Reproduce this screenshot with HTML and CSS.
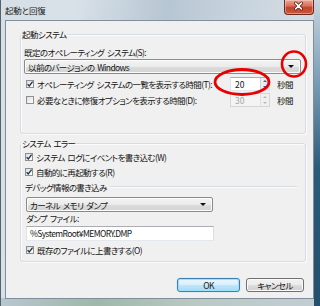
FILE: index.html
```html
<!DOCTYPE html>
<html lang="ja">
<head>
<meta charset="utf-8">
<title>起動と回復</title>
<link rel="stylesheet" href="styles.css">
</head>
<body>
<div class="win">
  <div class="titlebar">
    <span class="title">起動と回復</span>
    <div class="close">
      <svg width="30" height="15" viewBox="0 0 30 15">
        <path d="M12 4 L18 10 M18 4 L12 10" stroke="#5a1a10" stroke-width="3.2" stroke-linecap="round"/>
        <path d="M12 4 L18 10 M18 4 L12 10" stroke="#ffffff" stroke-width="1.6" stroke-linecap="round"/>
      </svg>
    </div>
  </div>
  <div class="client">
    <fieldset class="group g1">
      <legend>起動システム</legend>
      <div class="lbl l-os">既定のオペレーティング システム(S):</div>
      <div class="combo c-os"><span>以前のバージョンの Windows</span><i class="arrow"></i></div>
      <div class="trow r1">
        <div class="chk"><span class="box on"><svg width="8" height="8" viewBox="0 0 8 8"><path d="M1.6 4.2 L3.3 6 L6.6 1.6" fill="none" stroke="#22344c" stroke-width="1.3"/></svg></span><span>オペレーティング システムの一覧を表示する時間(T):</span></div>
        <div class="spin"><span class="val">20</span><span class="btns"><i class="up"></i><i class="dn"></i></span></div>
        <span class="unit">秒間</span>
      </div>
      <div class="trow r2">
        <div class="chk"><span class="box"></span><span>必要なときに修復オプションを表示する時間(D):</span></div>
        <div class="spin dis"><span class="val">30</span><span class="btns"><i class="up"></i><i class="dn"></i></span></div>
        <span class="unit">秒間</span>
      </div>
    </fieldset>

    <fieldset class="group g2">
      <legend>システム エラー</legend>
      <div class="chk row-w"><span class="box on"><svg width="8" height="8" viewBox="0 0 8 8"><path d="M1.6 4.2 L3.3 6 L6.6 1.6" fill="none" stroke="#22344c" stroke-width="1.3"/></svg></span><span>システム ログにイベントを書き込む(W)</span></div>
      <div class="chk row-r"><span class="box on"><svg width="8" height="8" viewBox="0 0 8 8"><path d="M1.6 4.2 L3.3 6 L6.6 1.6" fill="none" stroke="#22344c" stroke-width="1.3"/></svg></span><span>自動的に再起動する(R)</span></div>
      <div class="sep"><span>デバッグ情報の書き込み</span><i class="line"></i></div>
      <div class="combo c-dump"><span>カーネル メモリ ダンプ</span><i class="arrow"></i></div>
      <div class="lbl l-file">ダンプ ファイル:</div>
      <div class="input">%SystemRoot¥MEMORY.DMP</div>
      <div class="chk row-o"><span class="box on"><svg width="8" height="8" viewBox="0 0 8 8"><path d="M1.6 4.2 L3.3 6 L6.6 1.6" fill="none" stroke="#22344c" stroke-width="1.3"/></svg></span><span>既存のファイルに上書きする(O)</span></div>
    </fieldset>

    <div class="buttons">
      <div class="btn ok">OK</div>
      <div class="btn cancel">キャンセル</div>
    </div>
  </div>

  <svg class="marks" width="320" height="306" viewBox="0 0 320 306">
    <ellipse cx="294" cy="64" rx="12" ry="12.5" fill="none" stroke="#e80000" stroke-width="2.6"/>
    <ellipse cx="242" cy="82" rx="27" ry="12.5" fill="none" stroke="#e80000" stroke-width="2.8"/>
  </svg>
</div>
</body>
</html>
```

FILE: styles.css
```css
* { box-sizing: border-box; }
html, body { margin: 0; padding: 0; }
body {
  width: 320px;
  height: 306px;
  overflow: hidden;
  font-family: "Noto Sans CJK JP", "Noto Sans", sans-serif;
  font-size: 8.5px;
  line-height: 12px;
  letter-spacing: -0.6px;
  word-spacing: 1.5px;
  font-feature-settings: "palt";
  color: #141414;
}

.win {
  position: relative;
  width: 320px;
  height: 306px;
  display: flex;
  flex-direction: column;
  border-left: 1px solid #56616b;
  background:
    linear-gradient(to bottom, #c9d5df 0, #7fa0b8 25%, #2b5a7a 55%, #244f6e 100%) right top / 6px 100% no-repeat,
    linear-gradient(to right, #b8c6cf 0, #9fb7a8 30%, #b9c9c2 60%, #c3cdd4 100%) left bottom / 100% 8px no-repeat,
    linear-gradient(100deg, #d7dfe6 0, #d9e1e8 20%, #b7c6d3 45%, #c4d1dc 60%, #d3dbe3 80%, #c9d3dc 100%);
}

.titlebar {
  height: 20px;
  flex: none;
  display: flex;
  align-items: flex-start;
  padding: 0 6px 0 4px;
}
.title {
  margin-top: 4px;
  font-size: 8.5px;
  letter-spacing: -0.2px;
  line-height: 12px;
  color: #1a1a1a;
}
.close {
  margin-left: auto;
  width: 30px;
  height: 15px;
  border: 1px solid #6b2a1f;
  border-top: none;
  border-radius: 0 0 4px 4px;
  background: linear-gradient(to bottom, #e9a796 0, #d9735c 40%, #c2432a 55%, #c9583c 100%);
  box-shadow: inset 0 0 0 1px rgba(255, 220, 210, 0.45);
  display: flex;
}
.close svg { display: block; margin: -1px 0 0 -1px; }

.client {
  flex: 1;
  margin: 0 6px 7px 4px;
  border: 1px solid #7f8e9a;
  background: #f0f0f0;
  display: flex;
  flex-direction: column;
}

.group {
  margin: 0 7px 0 14px;
  padding: 0;
  min-width: 0;
  border: 1px solid #d5dce2;
  border-radius: 3px;
  box-shadow: inset 1px 1px 0 #fbfbfb, 1px 1px 0 #fbfbfb;
}
.group legend {
  padding: 0 1px;
  margin-left: 0;
  line-height: 12px;
}
.g1 { margin-top: 7px; height: 106px; }
.g2 { margin-top: 3px; height: 125px; }

.lbl { line-height: 12px; }
.l-os { margin: 6px 0 0 3px; }
.l-file { margin: 0 0 0 5px; }

.combo {
  height: 15px;
  border: 1px solid #8b8b8b;
  border-radius: 2px;
  background: linear-gradient(to bottom, #f4f4f4 0, #ebebeb 50%, #dcdcdc 51%, #d4d4d4 100%);
  box-shadow: inset 0 0 0 1px #fbfbfb;
  display: flex;
  align-items: center;
  padding: 0 4px 0 3px;
}
.combo span { flex: 1; }
.combo .arrow {
  width: 0;
  height: 0;
  border-left: 3px solid transparent;
  border-right: 3px solid transparent;
  border-top: 3px solid #111;
  margin-right: 2px;
}
.c-os { margin: 1px 4px 0 3px; }
.c-dump { margin: 4px 0 0 5px; width: 187px; }

.trow {
  display: grid;
  grid-template-columns: 197px 40px auto;
  column-gap: 7px;
  align-items: center;
  height: 14px;
  margin-left: 5px;
}
.r1 { margin-top: 3px; }
.r2 { margin-top: 2px; }

.chk {
  display: flex;
  align-items: center;
  gap: 3px;
  line-height: 12px;
  white-space: nowrap;
}
.box {
  width: 8px;
  height: 8px;
  flex: none;
  border: 1px solid #8e8f8f;
  background: linear-gradient(135deg, #dcdcdc 0, #f6f6f6 70%, #ffffff 100%);
  position: relative;
}
.box svg { position: absolute; left: -1px; top: -1px; }
.row-w { margin: 2px 0 0 4px; }
.row-r { margin: 3px 0 0 4px; }
.row-o { margin: 3px 0 0 5px; }

.spin {
  height: 14px;
  border: 1px solid #abadb3;
  border-color: #abadb3 #dbdfe6 #e3e9ef #e2e3ea;
  background: #fff;
  display: flex;
  align-items: center;
  padding-left: 4px;
  letter-spacing: 0;
}
.spin .val { flex: 1; }
.spin .btns {
  width: 9px;
  height: 12px;
  display: flex;
  flex-direction: column;
  background: linear-gradient(to right, #eef2f6, #dce4ec);
  border-left: 1px solid #c9d2db;
}
.spin .btns i {
  flex: 1;
  display: flex;
  align-items: center;
  justify-content: center;
}
.spin .up::before {
  content: "";
  border-left: 2px solid transparent;
  border-right: 2px solid transparent;
  border-bottom: 2px solid #4d6185;
}
.spin .dn::before {
  content: "";
  border-left: 2px solid transparent;
  border-right: 2px solid transparent;
  border-top: 2px solid #4d6185;
}
.spin.dis { background: #f4f4f4; color: #a3a3a3; border-color: #d6d6d6; }
.spin.dis .btns { background: #f0f0f0; border-left-color: #e0e0e0; }
.spin.dis .up::before { border-bottom-color: #b8b8b8; }
.spin.dis .dn::before { border-top-color: #b8b8b8; }
.unit { line-height: 12px; }

.sep {
  display: flex;
  align-items: center;
  margin: 3px 8px 0 4px;
  line-height: 12px;
}
.sep .line {
  flex: 1;
  height: 2px;
  margin: -1px 0 0 3px;
  border-top: 1px solid #d5dce2;
  border-bottom: 1px solid #fbfbfb;
}

.input {
  margin: 2px 0 0 5px;
  width: 188px;
  height: 15px;
  border: 1px solid #abadb3;
  border-color: #abadb3 #dbdfe6 #e3e9ef #e2e3ea;
  background: #fff;
  padding-left: 3px;
  line-height: 13px;
}

.buttons {
  display: flex;
  justify-content: flex-end;
  gap: 6px;
  margin-top: 16px;
  padding-right: 9px;
}
.btn {
  height: 14px;
  border: 1px solid #707070;
  border-radius: 3px;
  background: linear-gradient(to bottom, #f2f2f2 0, #ebebeb 50%, #dddddd 51%, #cfcfcf 100%);
  box-shadow: inset 0 0 0 1px #fafafa;
  text-align: center;
  line-height: 12px;
}
.ok {
  width: 63px;
  border-color: #3c7fb1;
  background: linear-gradient(to bottom, #eaf6fd 0, #d9f0fc 50%, #bee6fd 51%, #a7d9f5 100%);
  box-shadow: inset 0 0 0 1px #9fe0fb, 0 0 1px #6fc0ea;
}
.cancel { width: 58px; }

.marks {
  position: absolute;
  left: -1px;
  top: 0;
  pointer-events: none;
}
```
